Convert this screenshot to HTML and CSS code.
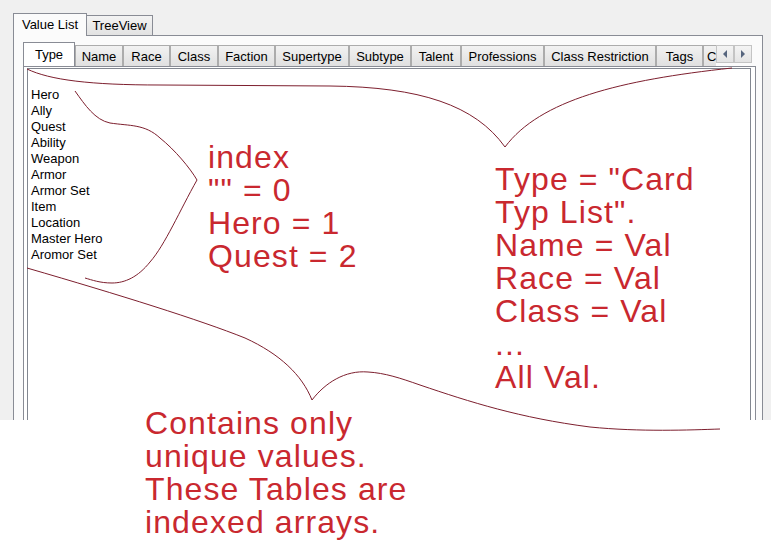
FILE: index.html
```html
<!DOCTYPE html>
<html>
<head>
<meta charset="utf-8">
<title>Value List</title>
<link rel="stylesheet" href="styles.css">
</head>
<body>
<div class="window">
  <div class="outer-strip">
    <div class="otab otab-active">Value List</div>
    <div class="otab otab-tree">TreeView</div>
  </div>
  <div class="outer-panel">
    <div class="inner-strip">
      <div class="itabs">
        <div class="itab itab-active w-type">Type</div>
        <div class="itab w-name">Name</div>
        <div class="itab w-race">Race</div>
        <div class="itab w-class">Class</div>
        <div class="itab w-faction">Faction</div>
        <div class="itab w-super">Supertype</div>
        <div class="itab w-sub">Subtype</div>
        <div class="itab w-talent">Talent</div>
        <div class="itab w-prof">Professions</div>
        <div class="itab w-restr">Class Restriction</div>
        <div class="itab w-tags">Tags</div>
        <div class="itab w-more">C</div>
      </div>
      <div class="arrows">
        <div class="arrow-btn"><svg width="6" height="8" viewBox="0 0 6 8"><polygon points="5,0 1,4 5,8" fill="#56657e"/></svg></div>
        <div class="arrow-btn"><svg width="6" height="8" viewBox="0 0 6 8"><polygon points="1,0 5,4 1,8" fill="#56657e"/></svg></div>
      </div>
    </div>
    <div class="inner-panel">
      <ul class="listbox">
        <li class="empty"></li>
        <li>Hero</li>
        <li>Ally</li>
        <li>Quest</li>
        <li>Ability</li>
        <li>Weapon</li>
        <li>Armor</li>
        <li>Armor Set</li>
        <li>Item</li>
        <li>Location</li>
        <li>Master Hero</li>
        <li>Aromor Set</li>
      </ul>
    </div>
  </div>
</div>

<svg class="braces" width="771" height="550" viewBox="0 0 771 550">
  <path d="M27,69 C50,80 90,85 160,85 L330,86 C420,87 475,105 505,147 C540,100 620,80 732,68"/>
  <path d="M75,91 C85,105 95,120 110,123 C130,126 145,124 160,138 C175,150 190,168 197,180 C180,210 165,245 150,262 C138,277 125,283 112,283 C100,283 92,280 85,278"/>
  <path d="M27,268 C120,295 200,320 245,338 C280,354 302,375 312,400 C325,383 345,370 368,372 C385,373 400,378 420,385 C470,402 520,418 590,427 C640,432 690,430 720,429"/>
</svg>

<div class="note note-index">index
"" = 0
Hero = 1
Quest = 2</div>
<div class="note note-type">Type = "Card
Typ List".
Name = Val
Race = Val
Class = Val
...
All Val.</div>
<div class="note note-contains">Contains only
unique values.
These Tables are
indexed arrays.</div>
</body>
</html>
```

FILE: styles.css
```css
html, body {
  margin: 0;
  padding: 0;
}
body {
  width: 771px;
  height: 550px;
  position: relative;
  overflow: hidden;
  background: #ffffff;
  font-family: "Liberation Sans", Arial, sans-serif;
  color: #000;
}

.window {
  height: 420px;
  box-sizing: border-box;
  padding: 13px 8px 0 13px;
  background: #f0f0f0;
  overflow: hidden;
}

/* outer tab control */
.outer-strip {
  display: flex;
  align-items: flex-end;
  height: 22px;
  position: relative;
  z-index: 1;
}
.otab {
  box-sizing: border-box;
  border: 1px solid #898c95;
  border-bottom: none;
  font-size: 13px;
  display: flex;
  align-items: center;
  justify-content: center;
  flex: none;
}
.otab-active {
  width: 74px;
  height: 23px;
  margin-bottom: -1px;
  background: #fbfbfb;
  padding-bottom: 2px;
}
.otab-tree {
  width: 66px;
  height: 20px;
  border-left: none;
  background: linear-gradient(#f3f3f3, #e2e2e2);
}

.outer-panel {
  box-sizing: border-box;
  height: 385px;
  border: 1px solid #898c95;
  border-bottom: none;
  background: #fbfbfb;
  padding: 6px 6px 0 9px;
  display: flex;
  flex-direction: column;
}

/* inner tab control */
.inner-strip {
  display: flex;
  height: 24px;
  flex: none;
  position: relative;
  z-index: 1;
}
.itabs {
  flex: 1;
  display: flex;
  align-items: flex-end;
  overflow: hidden;
  min-width: 0;
}
.itab {
  box-sizing: border-box;
  flex: none;
  height: 21px;
  border: 1px solid #acacac;
  border-bottom: none;
  background: linear-gradient(#f2f2f2, #e0e0e0);
  font-size: 13px;
  display: flex;
  align-items: center;
  justify-content: center;
  white-space: nowrap;
  overflow: hidden;
}
.itab-active {
  height: 25px;
  margin-bottom: -1px;
  background: #ffffff;
  border-color: #898c95;
  padding-bottom: 2px;
}
.w-type { width: 52px; }
.w-name { width: 48px; }
.w-race { width: 47px; }
.w-class { width: 48px; }
.w-faction { width: 57px; }
.w-super { width: 74px; }
.w-sub { width: 62px; }
.w-talent { width: 50px; }
.w-prof { width: 83px; }
.w-restr { width: 112px; }
.w-tags { width: 47px; }
.w-more { width: 13px; justify-content: flex-start; padding-left: 3px; border-right: none; }

.arrows {
  display: flex;
  align-self: flex-start;
  margin-top: 3px;
  margin-right: 4px;
}
.arrow-btn {
  box-sizing: border-box;
  width: 18px;
  height: 18px;
  border: 1px solid #c4c4c4;
  background: linear-gradient(#f4f4f4, #e4e4e4);
  display: flex;
  align-items: center;
  justify-content: center;
}

.inner-panel {
  flex: 1;
  box-sizing: border-box;
  border: 1px solid #898c95;
  border-bottom: none;
  background: #ffffff;
  padding: 1px 4px 0 3px;
  display: flex;
}
.listbox {
  flex: 1;
  margin: 0;
  padding: 2px 0 0 3px;
  list-style: none;
  border: 1px solid #828790;
  border-bottom: none;
  background: #ffffff;
  font-size: 13px;
  line-height: 16px;
}
.listbox .empty {
  height: 16px;
}

/* annotations */
.braces {
  position: absolute;
  left: 0;
  top: 0;
  fill: none;
  stroke: #7d1f2e;
  stroke-width: 1;
}
.note {
  position: absolute;
  white-space: pre;
  color: #c9282f;
  font-family: "Liberation Sans", Arial, sans-serif;
  font-size: 32px;
  line-height: 33px;
  letter-spacing: 1.1px;
}
.note-index { left: 208px; top: 141px; }
.note-type { left: 495px; top: 163px; }
.note-contains { left: 145px; top: 407px; }
```
